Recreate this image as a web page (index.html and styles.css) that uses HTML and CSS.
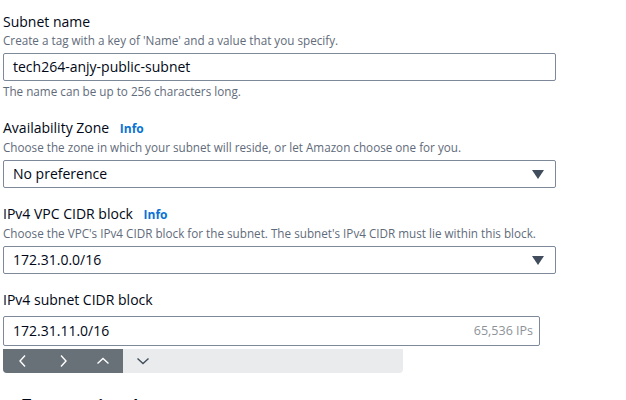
FILE: index.html
```html
<!DOCTYPE html>
<html>
<head>
<meta charset="utf-8">
<link rel="stylesheet" href="styles.css">
</head>
<body>
<div class="form">
  <div class="field f1">
    <div class="label">Subnet name</div>
    <div class="desc">Create a tag with a key of 'Name' and a value that you specify.</div>
    <div class="input">tech264-anjy-public-subnet</div>
    <div class="constraint">The name can be up to 256 characters long.</div>
  </div>

  <div class="field f2">
    <div class="label">Availability Zone <span class="info">Info</span></div>
    <div class="desc">Choose the zone in which your subnet will reside, or let Amazon choose one for you.</div>
    <div class="input select">No preference
      <svg class="caret" width="12" height="9" viewBox="0 0 12 9"><path d="M0 0H12L6 9Z" fill="#414d5c"/></svg>
    </div>
  </div>

  <div class="field f3">
    <div class="label">IPv4 VPC CIDR block <span class="info">Info</span></div>
    <div class="desc">Choose the VPC's IPv4 CIDR block for the subnet. The subnet's IPv4 CIDR must lie within this block.</div>
    <div class="input select">172.31.0.0/16
      <svg class="caret" width="12" height="9" viewBox="0 0 12 9"><path d="M0 0H12L6 9Z" fill="#414d5c"/></svg>
    </div>
  </div>

  <div class="field f4">
    <div class="label">IPv4 subnet CIDR block</div>
    <div class="input cidr">172.31.11.0/16<span class="ips">65,536 IPs</span></div>
    <div class="toolbar">
      <div class="tb dark">
        <span class="btn"><svg width="10" height="14" viewBox="0 0 10 14"><path d="M7 1.5L2 7l5 5.5" fill="none" stroke="#fff" stroke-width="1.4"/></svg></span>
        <span class="btn"><svg width="10" height="14" viewBox="0 0 10 14"><path d="M3 1.5L8 7l-5 5.5" fill="none" stroke="#fff" stroke-width="1.4"/></svg></span>
        <span class="btn"><svg width="14" height="10" viewBox="0 0 14 10"><path d="M1.5 7.5L7 2.5l5.5 5" fill="none" stroke="#fff" stroke-width="1.4"/></svg></span>
      </div>
      <div class="tb light">
        <span class="btn"><svg width="14" height="10" viewBox="0 0 14 10"><path d="M1.5 2.5L7 7.5l5.5-5" fill="none" stroke="#414d5c" stroke-width="1.4"/></svg></span>
      </div>
    </div>
  </div>

  <div class="expand">
    <svg width="10" height="8" viewBox="0 0 10 8"><path d="M0 0H10L5 8Z" fill="#414d5c"/></svg>
    <span>Tags - optional</span>
  </div>
</div>
</body>
</html>
```
FILE: styles.css
```css
html, body {
  margin: 0;
  padding: 0;
  background: #ffffff;
}
body {
  font-family: "Open Sans", "Noto Sans", Arial, sans-serif;
  color: #000716;
  overflow: hidden;
}
.form {
  padding: 12px 3px 0 3px;
  display: flex;
  flex-direction: column;
}
.field {
  display: flex;
  flex-direction: column;
}
.f2 { margin-top: 19px; }
.f3 { margin-top: 16px; }
.f4 { margin-top: 16px; }
.label {
  font-size: 14px;
  line-height: 20px;
  color: #000716;
}
.info {
  font-size: 12px;
  font-weight: 700;
  color: #0972d3;
  margin-left: 7px;
}
.desc {
  font-size: 11.7px;
  line-height: 16px;
  color: #5f6b7a;
}
.input {
  box-sizing: border-box;
  width: 553px;
  height: 28px;
  margin-top: 5px;
  border: 1px solid #7d8998;
  border-radius: 2px;
  padding: 0 9px;
  font-size: 14px;
  line-height: 26px;
  color: #000716;
  display: flex;
  align-items: center;
}
.select {
  justify-content: space-between;
}
.caret {
  margin-right: 2px;
}
.constraint {
  margin-top: 2px;
  font-size: 11.7px;
  line-height: 16px;
  color: #5f6b7a;
}
.cidr {
  width: 537px;
  height: 30px;
  margin-top: 6px;
  justify-content: space-between;
  padding-right: 6px;
}
.ips {
  font-size: 12.5px;
  color: #8d9399;
}
.toolbar {
  margin-top: 3px;
  width: 400px;
  height: 24px;
  display: flex;
  border-radius: 0 0 4px 4px;
  overflow: hidden;
  background: #e9ebed;
}
.tb {
  display: flex;
  height: 100%;
}
.dark {
  background: #687078;
}
.btn {
  width: 40px;
  height: 100%;
  display: flex;
  align-items: center;
  justify-content: center;
}
.expand {
  margin-top: 22px;
  display: flex;
  align-items: center;
  gap: 9px;
  font-size: 16px;
  font-weight: 700;
  line-height: 20px;
}
```
